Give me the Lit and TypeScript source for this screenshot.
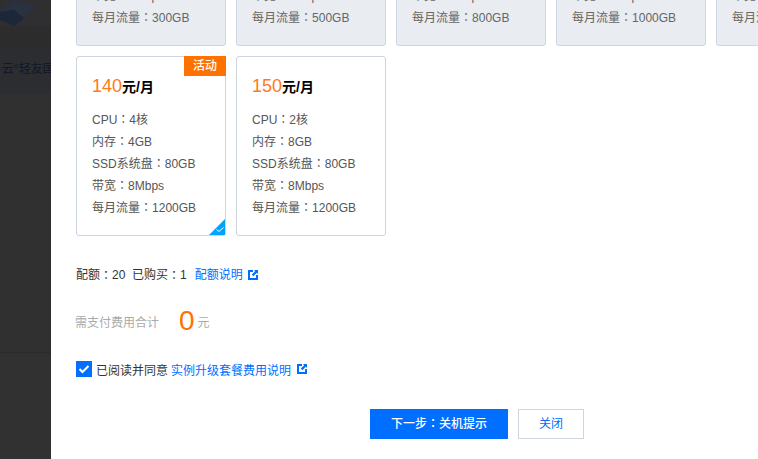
import { LitElement, html, css, svg } from "lit";
import { customElement } from "lit/decorators.js";

const top = [
  { p: 100, b: "5Mbps", t: "300GB" },
  { p: 110, b: "5Mbps", t: "500GB" },
  { p: 120, b: "6Mbps", t: "800GB" },
  { p: 130, b: "7Mbps", t: "1000GB" },
  { p: 135, b: "7Mbps", t: "1000GB" },
];

const extIcon = html`<svg class="ext" viewBox="0 0 10 10" width="10" height="10">
  <path d="M0 0h5v2H2v6h6V5h2v5H0z M6 0h4v4L8.800 2.800 5.400 6.200 3.800 4.600 7.200 1.200z" fill="#006eff"/>
</svg>`;

const colon = html`<span class="colon">：</span>`;

@customElement("app-root")
export class AppRoot extends LitElement {
  static styles = css`
    :host { display: grid; grid-template-columns: 51px 1fr; width: 758px; height: 459px; overflow: hidden;
      font-family: "Liberation Sans", "Noto Sans CJK SC", sans-serif; font-size: 12px; color: #444; }
    .back { background: #313131; display: flex; flex-direction: column; overflow: hidden; }
    .b1 { height: 26px; background: #2f2f31; overflow: hidden; }
    .b1 svg { display: block; }
    .b2 { height: 20px; background: #2c2c2c; }
    .b3 { height: 48px; background: #2b2d31; color: #10172a; white-space: nowrap; font-size: 12px; line-height: 47px; padding-left: 2px; }
    .b4 { height: 258px; background: #303030; }
    .b5 { flex: 1; background: #313131; border-top: 1px solid #2a2a2a; }
    .panel { background: #fff; padding-left: 25px; overflow: hidden; min-width: 0; }
    .row { display: flex; gap: 10px; width: 800px; }
    .row.first { margin-top: -134px; margin-bottom: 10px; }
    .card { box-sizing: border-box; flex: none; width: 150px; height: 180px; border: 1px solid #cfd5de; border-radius: 3px;
      background: #fff; padding: 17px 15px 0; position: relative; }
    .card.off { background: #e9ecf1; }
    .price { height: 24px; line-height: 24px; font-size: 14px; color: #000; margin-bottom: 11px; font-weight: 700; }
    .price b { font-weight: 400; font-size: 18px; color: #ff7a1a; }
    .line { height: 22px; line-height: 22px; color: #555; white-space: nowrap; }
    .off .line { color: #666; }
    .colon { font-family: "Noto Sans CJK TC", sans-serif; line-height: 0; }
    .flag { position: absolute; right: -1px; top: -1px; width: 42px; height: 20px; background: #ff7200; color: #fff;
      text-align: center; line-height: 20px; font-weight: 500; }
    .tick { position: absolute; right: 0; bottom: 0; display: block; }
    .quota { margin-top: 30px; height: 18px; line-height: 18px; display: flex; align-items: center; color: #333; white-space: pre; }
    a { color: #006eff; text-decoration: none; }
    .ext { margin-left: 5px; flex: none; }
    .quota a { margin-left: 8px; }
    .total { display: flex; align-items: center; margin: 17px 0 0 -1px; height: 40px; color: #aaa; }
    .total .num { font-size: 28px; color: #ff7200; margin-left: 20px; margin-right: 3px; }
    .agree { display: flex; align-items: center; margin-top: 19px; height: 18px; color: #333; }
    .box { width: 16px; height: 16px; background: #006eff; margin-right: 4px; flex: none; display: block; }
    .agree a { margin-left: 3px; }
    .agree .ext { margin-left: 6px; }
    .ops { display: flex; gap: 10px; margin-top: 31px; margin-left: 294px; }
    .btn { box-sizing: border-box; height: 30px; line-height: 28px; text-align: center; border: 1px solid #006eff; }
    .btn.pri { width: 138px; background: #006eff; color: #fff; font-weight: 500; }
    .btn.sec { width: 66px; background: #fff; color: #006eff; border-color: #cfd5de; }
  `;

  private spec(cpu: string, mem: string, band: string, traffic: string) {
    return html`<div class="line">CPU${colon}${cpu}</div><div class="line">内存${colon}${mem}</div>
      <div class="line">SSD系统盘${colon}80GB</div><div class="line">带宽${colon}${band}</div>
      <div class="line">每月流量${colon}${traffic}</div>`;
  }

  render() {
    return html`
      <div class="back">
        <div class="b1"><svg width="51" height="26" viewBox="0 0 51 26">
          ${svg`<path d="M0 9 L14 0 L37 6 L14 26 Z" fill="#2a3140"/><path d="M0 12 L14 10 L24 18 L14 26 L0 20 Z" fill="#1c2739"/>`}
        </svg></div>
        <div class="b2"></div>
        <div class="b3">云°轻友国</div>
        <div class="b4"></div>
        <div class="b5"></div>
      </div>
      <div class="panel">
        <div class="row first">
          ${top.map((c) => html`<div class="card off">
            <div class="price"><b>${c.p}</b>元/月</div>
            ${this.spec("2核", "4GB", c.b, c.t)}
          </div>`)}
        </div>
        <div class="row">
          <div class="card">
            <div class="price"><b>140</b>元/月</div>
            ${this.spec("4核", "4GB", "8Mbps", "1200GB")}
            <div class="flag">活动</div>
            <svg class="tick" width="16" height="16" viewBox="0 0 16 16">
              <path d="M16 0V16H0Z" fill="#00a4ff"/>
              <path d="M7.500 10.500l2.500 2 4.500-4" fill="none" stroke="#fff" stroke-width="1"/>
            </svg>
          </div>
          <div class="card">
            <div class="price"><b>150</b>元/月</div>
            ${this.spec("2核", "8GB", "8Mbps", "1200GB")}
          </div>
        </div>
        <div class="quota">配额${colon}20  已购买${colon}1<a>配额说明</a>${extIcon}</div>
        <div class="total">需支付费用合计<span class="num">0</span>元</div>
        <div class="agree">
          <svg class="box" viewBox="0 0 16 16"><path d="M3.500 8l3 3 6-6" fill="none" stroke="#fff" stroke-width="2"/></svg>
          已阅读并同意<a>实例升级套餐费用说明</a>${extIcon}
        </div>
        <div class="ops">
          <div class="btn pri">下一步${colon}关机提示</div>
          <div class="btn sec">关闭</div>
        </div>
      </div>`;
  }
}
